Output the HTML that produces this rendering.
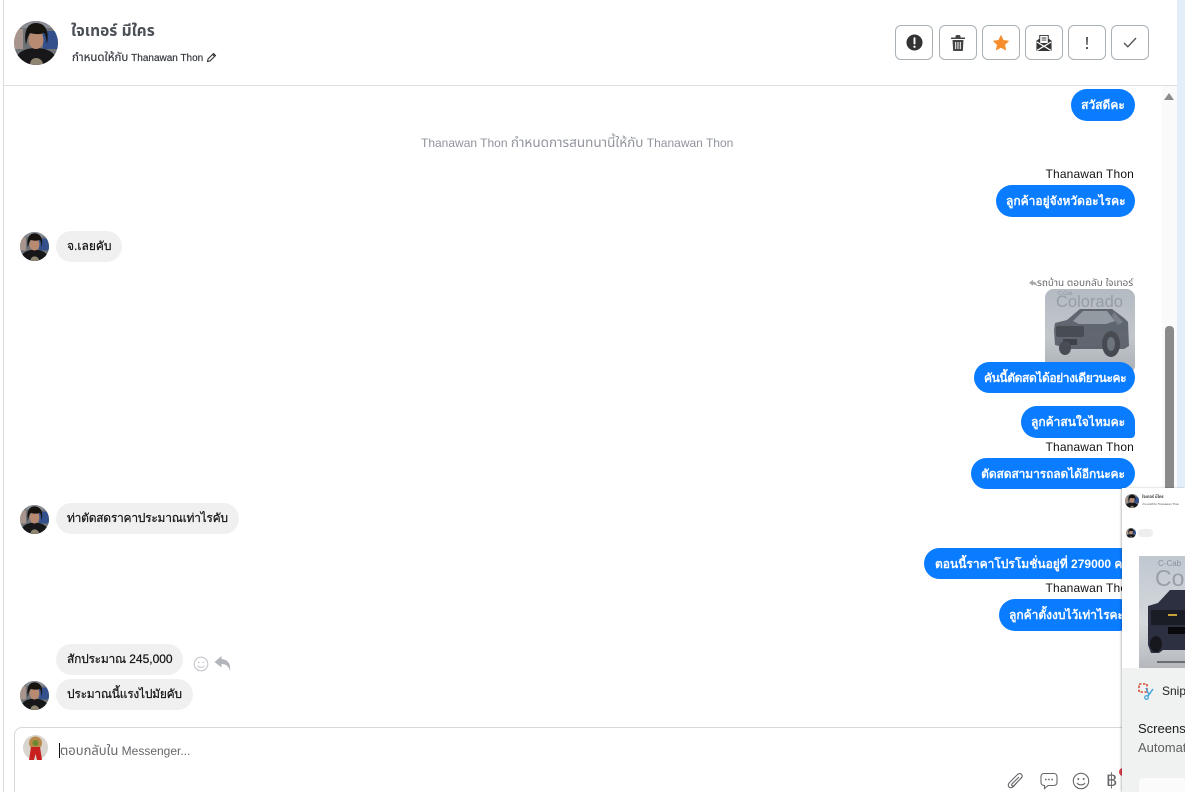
<!DOCTYPE html>
<html lang="th"><head><meta charset="utf-8"><title>Chat</title>
<style>
*{box-sizing:border-box}
html,body{margin:0;padding:0;width:1185px;height:792px;overflow:hidden;background:#fff}
body{position:relative;font-family:"Liberation Sans","Noto Sans CJK SC","Noto Sans CJK JP",sans-serif;font-size:12px;color:#111}
.a{position:absolute}
.t{position:absolute;white-space:nowrap;font-family:"Liberation Sans","Noto Sans Thai","DejaVu Sans",sans-serif}
.me{position:absolute;height:32px;border-radius:16px;background:#0a7cff;color:#fff;font-weight:700;font-size:12px;line-height:33px;padding:0 10px;white-space:nowrap;text-align:center}
.in{position:absolute;height:31px;border-radius:16px;background:#f1f0f0;color:#111;font-size:12px;line-height:31px;padding:0 11px;white-space:nowrap;left:56px;-webkit-text-stroke:.2px #111}
.in span{letter-spacing:-.25px}
.btn{position:absolute;top:25px;width:38px;height:35px;border:1px solid #aab2b7;border-radius:6px;background:#fff;display:flex;align-items:center;justify-content:center}
.name{position:absolute;right:51px;font-size:12px;color:#111;white-space:nowrap;letter-spacing:.15px}
</style></head><body>
<svg width="0" height="0" style="position:absolute"><defs>
<clipPath id="c"><circle cx="22" cy="22" r="22"/></clipPath>
<symbol id="av" viewBox="0 0 44 44"><g clip-path="url(#c)">
<rect width="44" height="44" fill="#6f7378"/><rect x="29" y="10" width="15" height="18" fill="#33508c"/><rect x="0" y="8" width="9" height="20" fill="#a8968e"/><rect x="0" y="0" width="44" height="7" fill="#8b8f95"/>
<path d="M0 44C1 31 11 27 22 27s21 4 22 17z" fill="#17171a"/>
<ellipse cx="22" cy="19" rx="7.500" ry="9" fill="#b98a72"/>
<path d="M12 24C9 8 15 2 22 2s14 5 11 21c-1-5-1-9-3-11-5 2-11 1-14 0-2 3-3 7-4 12z" fill="#17130f"/>
<path d="M16 44c0-5 3-7 6-7s7 2 7 7z" fill="#8f8571"/>
</g></symbol>
</defs></svg>

<!-- left edge + header -->
<div class="a" style="left:3px;top:0;width:1px;height:792px;background:#dcdcdc"></div>
<div class="a" style="left:4px;top:85px;width:1173px;height:1px;background:#dddfe2"></div>
<div class="a" style="left:1162px;top:86px;width:15px;height:402px;background:#fafafa"></div>
<div class="a" style="left:1177px;top:0;width:8px;height:488px;background:#e3eefa"></div>

<svg class="a" style="left:14px;top:21px" width="44" height="44"><use href="#av"/></svg>
<div class="t" style="left:71px;top:23px;font-size:15.500px;line-height:18px;font-weight:700;color:#4b4f56">ใจเทอร์ มีใคร</div>
<div class="t" style="left:72px;top:52px;font-size:10px;line-height:13px;color:#2f3338;-webkit-text-stroke:.15px #2f3338"><span style="font-size:11.500px">กำหนดให้กับ</span> Thanawan Thon</div>
<svg class="a" style="left:206px;top:52px" width="11" height="11" viewBox="0 0 11 11"><path d="M1.500 9.500l.6-2.600 5.400-5.400 2 2-5.400 5.400zM6.600 2.400l2 2" fill="none" stroke="#333" stroke-width="1.100"/></svg>

<div class="btn" style="left:895px"><svg width="17" height="17" viewBox="0 0 18 18"><circle cx="9" cy="9" r="8.500" fill="#333"/><rect x="8" y="3.500" width="2" height="7.500" rx="1" fill="#fff"/><circle cx="9" cy="13.500" r="1.200" fill="#fff"/></svg></div>
<div class="btn" style="left:939px"><svg width="16" height="18" viewBox="0 0 16 18"><path d="M1 3.500h14V5H1zM5.500 3.500V2l1-1h3l1 1v1.500" fill="#444"/><path d="M2.500 6h11l-.7 11H3.200z" fill="#444"/><path d="M5.700 8v7M8 8v7M10.300 8v7" stroke="#fff" stroke-width="1"/></svg></div>
<div class="btn" style="left:982px"><svg width="16" height="16" viewBox="0 0 16 16"><path d="M8 .8l2.200 4.700 5.100.6-3.800 3.500 1 5.100L8 12.200l-4.500 2.500 1-5.100L.7 6.100l5.100-.6z" fill="#f68e2e" stroke="#f68e2e" stroke-linejoin="round"/></svg></div>
<div class="btn" style="left:1025px"><svg width="16" height="17" viewBox="0 0 16 18"><path d="M0 7l3-2V1h10v4l3 2v11H0z" fill="#333"/><rect x="4" y="2" width="8" height="7.500" fill="#fff"/><path d="M5.500 4.200h5M5.500 6.400h5" stroke="#333"/><path d="M.5 8.500L8 13l7.500-4.500M.5 17.500L8 13l7.500 4.500" fill="none" stroke="#fff" stroke-width="1.300"/></svg></div>
<div class="btn" style="left:1068px"><svg width="6" height="14" viewBox="0 0 6 14"><path d="M2.100 1h1.800l-.3 8H2.400z" fill="#444"/><rect x="2.100" y="11" width="1.800" height="2" fill="#444"/></svg></div>
<div class="btn" style="left:1111px"><svg width="14" height="11" viewBox="0 0 14 11"><path d="M1 6l3.800 3.800L13 1" fill="none" stroke="#555" stroke-width="1.400"/></svg></div>

<!-- scrollbar -->
<div class="a" style="left:1164px;top:93px;width:0;height:0;border-left:5px solid transparent;border-right:5px solid transparent;border-bottom:7px solid #8c8c8c"></div>
<div class="a" style="left:1165px;top:326px;width:9px;height:166px;background:#8a8a8a;border-radius:4px 4px 0 0"></div>

<!-- messages -->
<div class="me" style="left:1071px;top:89px;width:64px">สวัสดีคะ</div>
<div class="t" style="left:421px;top:135px;font-size:12px;line-height:15px;color:#90949c">Thanawan Thon <span style="font-size:13.500px">กำหนดการสนทนานี้ให้กับ</span> Thanawan Thon</div>
<div class="name" style="top:167px;line-height:15px">Thanawan Thon</div>
<div class="me" style="left:996px;top:185px;width:139px">ลูกค้าอยู่จังหวัดอะไรคะ</div>

<svg class="a" style="left:20px;top:232px" width="29" height="29" viewBox="0 0 44 44"><use href="#av"/></svg>
<div class="in" style="top:231px;width:66px">จ.เลยคับ</div>

<div class="t" style="left:1029px;top:277px;font-size:10px;line-height:13px;color:#65676b">
<svg width="8" height="8" viewBox="0 0 12 12" style="vertical-align:-1px"><path d="M6 1L0 6l6 4V8c3 0 5 1 6 3 0-4-2-7-6-7z" fill="#a8a8a8"/></svg>รถบ้าน ตอบกลับ ใจเทอร์</div>
<div class="a" style="left:1045px;top:289px;width:90px;height:85px;border-radius:9px;overflow:hidden;background:#bcc2c8">
<svg width="90" height="85" viewBox="0 0 90 85">
<defs><linearGradient id="g1" x1="0" y1="0" x2="0" y2="1"><stop offset="0" stop-color="#b3bac1"/><stop offset=".55" stop-color="#c2c7cc"/><stop offset="1" stop-color="#aab0b6"/></linearGradient></defs>
<rect width="90" height="85" fill="url(#g1)"/>
<text x="13" y="6" font-family="Liberation Sans,sans-serif" font-size="5" fill="#8f969e">C-Cab</text>
<text x="11" y="18" font-family="Liberation Sans,sans-serif" font-size="16.500" fill="#959da5">Colorado</text>
<g opacity=".82" transform="translate(0 3)">
<path d="M10 31l12-3 13-11h32l12 9 4 4 1 24-5 3H25l-15-4-1-15z" fill="#4c525c"/>
<path d="M28 29l10-10h24l8 10-9 3H34z" fill="#8b929a"/>
<path d="M69 20l9 10-5 3-6-9z" fill="#6b717a"/>
<rect x="11" y="34" width="28" height="11" rx="2" fill="#2e323a"/>
<rect x="18" y="47" width="14" height="6" fill="#23262c"/>
<ellipse cx="20" cy="56" rx="6" ry="7" fill="#31343b"/><ellipse cx="66" cy="52" rx="9" ry="13" fill="#2e3138"/><ellipse cx="66" cy="52" rx="4" ry="7" fill="#5d636b"/>
</g>
<rect x="10" y="74" width="70" height="2" fill="#80868d"/><rect x="22" y="78" width="46" height="2" fill="#80868d"/>
</svg></div>
<div class="me" style="left:974px;top:362px;width:161px;height:31px;letter-spacing:-.4px;line-height:32px">คันนี้ตัดสดได้อย่างเดียวนะคะ</div>
<div class="me" style="left:1021px;top:406px;width:114px;border-radius:16px 16px 4px 16px">ลูกค้าสนใจไหมคะ</div>
<div class="name" style="top:440px;line-height:15px">Thanawan Thon</div>
<div class="me" style="left:971px;top:458px;width:164px;height:31px;letter-spacing:-.1px;line-height:32px">ตัดสดสามารถลดได้อีกนะคะ</div>

<svg class="a" style="left:20px;top:505px" width="29" height="29" viewBox="0 0 44 44"><use href="#av"/></svg>
<div class="in" style="top:503px;width:183px"><span>ท่าตัดสดราคาประมาณเท่าไรคับ</span></div>

<div class="me" style="left:924px;top:548px;width:211px;height:31px;text-align:left;padding-left:11px;line-height:32px">ตอนนี้ราคาโปรโมชั่นอยู่ที่ 279000 คะ</div>
<div class="name" style="top:581px;line-height:15px">Thanawan Thon</div>
<div class="me" style="left:999px;top:599px;width:136px;height:32px;text-align:left">ลูกค้าตั้งงบไว้เท่าไรคะ</div>

<div class="in" style="top:644px;width:127px"><span>สักประมาณ</span> 245,000</div>
<svg class="a" style="left:193px;top:656px" width="16" height="16" viewBox="0 0 16 16"><circle cx="8" cy="8" r="6.800" fill="none" stroke="#c4c7cb" stroke-width="1.100"/><circle cx="5.700" cy="6.300" r=".8" fill="#c4c7cb"/><circle cx="10.300" cy="6.300" r=".8" fill="#c4c7cb"/><path d="M4.500 9.500c1.500 2.500 5.500 2.500 7 0" fill="none" stroke="#c4c7cb"/></svg>
<svg class="a" style="left:214px;top:655px" width="17" height="17" viewBox="0 0 17 17"><path d="M7.500 1L.5 7l7 5.500V9c4 0 7 1.500 8.500 7 1-7-2-11.500-8.500-12z" fill="#b2b6bb"/></svg>
<svg class="a" style="left:20px;top:681px" width="29" height="29" viewBox="0 0 44 44"><use href="#av"/></svg>
<div class="in" style="top:679px;width:137px"><span>ประมาณนี้แรงไปมัยคับ</span></div>

<!-- composer -->
<div class="a" style="left:14px;top:727px;width:1130px;height:80px;border:1px solid #d8d8d8;border-radius:8px 8px 0 0;background:#fff"></div>
<svg class="a" style="left:23px;top:735px" width="25" height="25" viewBox="0 0 25 25"><circle cx="12.500" cy="12.500" r="12.500" fill="#d9d4ce"/><circle cx="12.500" cy="8" r="6.500" fill="#b98a4a"/><circle cx="12.500" cy="8" r="3" fill="#6d8a33"/><path d="M8 12l-2 13h5l1.500-6 1.500 6h5l-2-13z" fill="#c8201f"/></svg>
<div class="a" style="left:59px;top:743px;width:1px;height:15px;background:#111"></div>
<div class="t" style="left:60px;top:743px;font-size:12px;line-height:15px;color:#65676b"><span style="font-size:13px">ตอบกลับใน</span> Messenger...</div>

<svg class="a" style="left:1007px;top:772px" width="18" height="18" viewBox="0 0 18 18"><path d="M15.500 4.500L6.500 14.500c-1.500 1.500-3.500 1.500-4.500.5s-1-3 .5-4.500L10.500 2.500c1.200-1.200 3-1.200 4-.2s1 2.500-.2 3.700L7 13.500c-.7.7-1.500.7-2 .2s-.5-1.300.2-2L12 5" fill="none" stroke="#65676b" stroke-width="1.100"/></svg>
<svg class="a" style="left:1040px;top:772px" width="18" height="18" viewBox="0 0 18 18"><path d="M4 1.500h10a3 3 0 0 1 3 3v6a3 3 0 0 1-3 3H8l-3.500 3v-3H4a3 3 0 0 1-3-3v-6a3 3 0 0 1 3-3z" fill="none" stroke="#65676b" stroke-width="1.100"/><circle cx="5.800" cy="7.500" r=".9" fill="#65676b"/><circle cx="9" cy="7.500" r=".9" fill="#65676b"/><circle cx="12.200" cy="7.500" r=".9" fill="#65676b"/></svg>
<svg class="a" style="left:1072px;top:772px" width="18" height="18" viewBox="0 0 18 18"><circle cx="9" cy="9" r="7.700" fill="none" stroke="#65676b" stroke-width="1.100"/><circle cx="6.300" cy="7" r="1" fill="#65676b"/><circle cx="11.700" cy="7" r="1" fill="#65676b"/><path d="M5 11c1.800 2.500 6.200 2.500 8 0" fill="none" stroke="#65676b" stroke-width="1.100"/></svg>
<div class="t" style="left:1106px;top:771px;font-family:'DejaVu Sans',sans-serif;font-size:18px;line-height:20px;color:#65676b">฿</div>
<div class="a" style="left:1119px;top:768px;width:8px;height:8px;border-radius:50%;background:#e0424f"></div>

<!-- snip popup -->
<div class="a" style="left:1122px;top:488px;width:63px;height:304px;background:#f0f1f1;overflow:hidden;box-shadow:-1px 0 2px rgba(0,0,0,.25)">
  <div class="a" style="left:0;top:0;width:63px;height:180px;background:#fff"></div>
  <svg class="a" style="left:3px;top:6px" width="14" height="14" viewBox="0 0 44 44"><use href="#av"/></svg>
  <div class="t" style="left:20px;top:6px;font-size:4px;line-height:6px;color:#444;font-weight:700">ใจเทอร์ มีใคร</div>
  <div class="t" style="left:20px;top:14px;font-size:3px;line-height:5px;color:#555">กำหนดให้กับ Thanawan Thon</div>
  <svg class="a" style="left:4px;top:40px" width="10" height="10" viewBox="0 0 44 44"><use href="#av"/></svg>
  <div class="a" style="left:16px;top:41px;width:15px;height:8px;border-radius:4px;background:#eee"></div>
  <div class="a" style="left:17px;top:68px;width:46px;height:112px;overflow:hidden;background:#c3c8cd">
    <svg width="46" height="112" viewBox="0 0 46 112">
      <defs><linearGradient id="g2" x1="0" y1="0" x2="0" y2="1"><stop offset="0" stop-color="#bfc7d0"/><stop offset=".6" stop-color="#d6d9dc"/><stop offset="1" stop-color="#b4b8bc"/></linearGradient></defs>
      <rect width="46" height="112" fill="url(#g2)"/>
      <text x="19" y="10" font-family="Liberation Sans,sans-serif" font-size="8" fill="#8b929a">C-Cab</text>
      <text x="16" y="30" font-family="Liberation Sans,sans-serif" font-size="23" fill="#989fa7">Co</text>
      <path d="M9 50l10-3 12-13h15v60H24l-4 3H12l-3-8z" fill="#2c3040"/>
      <rect x="12" y="54" width="34" height="15" fill="#1a1c26"/><rect x="29" y="71" width="17" height="7" fill="#0a0a0c"/>
      <path d="M29 59h9" stroke="#c9a13a" stroke-width="2"/>
      <ellipse cx="17" cy="88" rx="6" ry="8" fill="#17181d"/>
      <rect x="18" y="105" width="28" height="2" fill="#6a6d72"/>
    </svg>
  </div>
  <svg class="a" style="left:16px;top:195px" width="17" height="17" viewBox="0 0 17 17"><path d="M1 1h8v8H1z" fill="none" stroke="#d8503c" stroke-width="1.600" stroke-dasharray="2.500 1.500"/><path d="M8 5l3 7M15 6l-5 7" stroke="#39a0d8" stroke-width="1.400"/><circle cx="8.500" cy="14.500" r="1.800" fill="none" stroke="#39a0d8" stroke-width="1.200"/></svg>
  <div class="t" style="left:40px;top:195px;font-size:12px;line-height:16px;color:#222">Snipping Tool</div>
  <div class="t" style="left:16px;top:232px;font-size:13px;line-height:17px;color:#1b1b1b">Screenshot copied</div>
  <div class="t" style="left:16px;top:251px;font-size:13px;line-height:17px;color:#5f5f5f">Automatically saved</div>
  <div class="a" style="left:17px;top:290px;width:60px;height:30px;background:#fbfbfb;border-radius:4px"></div>
</div>
</body></html>
